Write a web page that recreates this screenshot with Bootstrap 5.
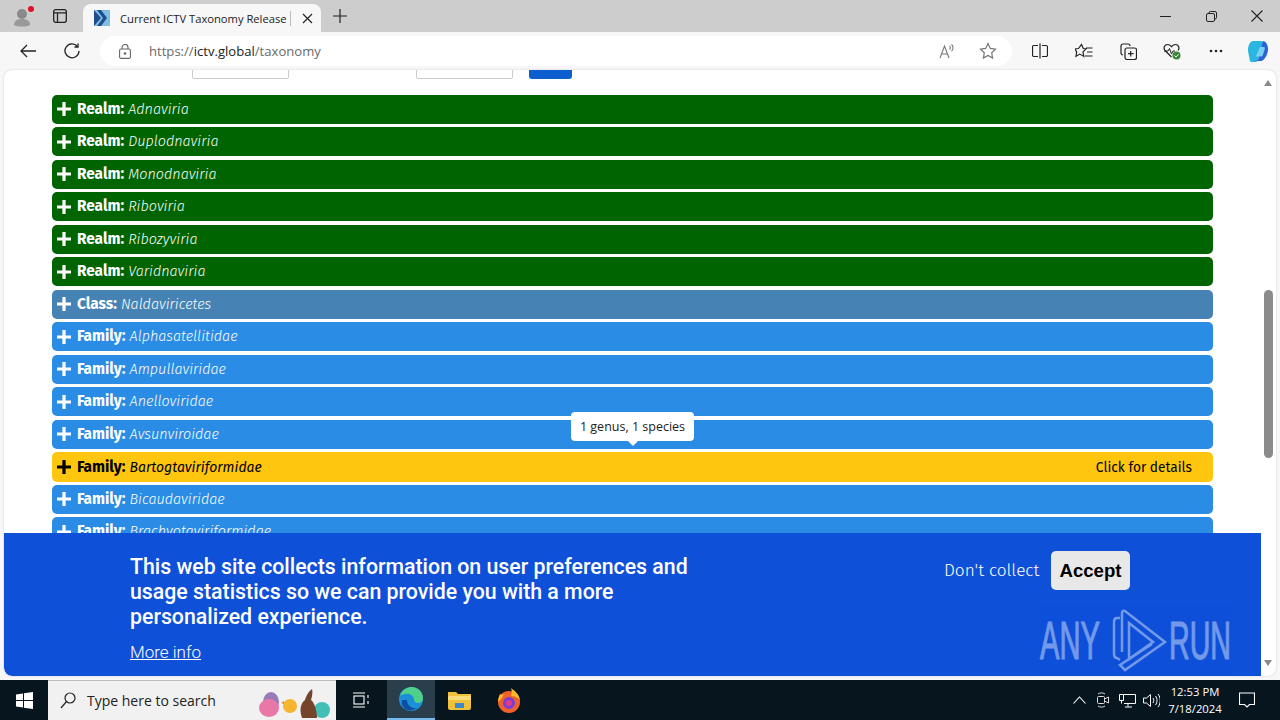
<!DOCTYPE html>
<html>
<head>
    <title>Current ICTV Taxonomy Release</title>
    <link href="https://cdn.jsdelivr.net/npm/bootstrap@5.3.5/dist/css/bootstrap.min.css" rel="stylesheet">
    <style>
        html, body { height: 720px; overflow: hidden; }
        body { width: 1280px; background: #f7f7f7; font-family: "Open Sans", sans-serif; }
        svg { display: block; flex: none; }

        .tabstrip { height: 32px; background: #cdcdcd; }
        .profile-slot { width: 44px; }
        .tabs-slot { width: 32px; margin-right: 7px; }
        .browser-tab { width: 238px; height: 28px; margin-top: 4px; background: #f7f7f7; border-radius: 8px 8px 0 0; padding: 0 8px 0 11px; font: 11.2px "Open Sans", sans-serif; color: #222; }
        .tab-title { width: 171px; margin-left: 10px; overflow: hidden; white-space: nowrap; border-right: 1px solid #bbb; }
        .new-tab { width: 38px; }
        .win-btn { width: 46px; }

        .toolbar { height: 38px; padding-top: 4px; }
        .tool-btn { width: 44px; height: 30px; }
        .tool-back { margin-left: 6px; }
        .tool-copilot { margin-left: -2px; }
        .address-pill { width: 912px; height: 30px; margin-left: 6px; margin-right: 6px; background: #fff; border-radius: 15px; padding: 0 15px 0 19px; font: 13.1px "Open Sans", sans-serif; color: #6a6a6a; }
        .address-pill b { font-weight: 400; color: #222; }
        .url-text { margin-left: 18px; }

        .viewport { height: 606px; margin: 0 4px; background: #fff; border-radius: 8px; overflow: hidden; box-shadow: 0 0 2px rgba(0,0,0,.2); }
        .page-col { width: 1257px; padding: 0 48px; }
        .form-strip { height: 9px; margin-bottom: 15.9px; }
        .form-box { width: 97px; height: 20px; border: 1px solid #ccc; border-radius: 0 0 2px 2px; background: #fff; }
        .form-go { width: 43px; height: 20px; background: #0d5fd0; border-radius: 0 0 3px 3px; }
        .spacer-a { width: 140px; }
        .spacer-b { width: 127px; }
        .spacer-c { width: 16px; }

        .tax-row { height: 29px; margin-bottom: 3.5px; padding: 0 21px 0 5px; border-radius: 5px; color: #fff; font: 14px/29px "Fira Sans", "Open Sans", sans-serif; white-space: nowrap; }
        .tax-row b { font-weight: 700; margin: 0 4px 0 6px; font-size: 15.4px; }
        .tax-row i { font-weight: 300; font-size: 14.4px; }
        .tax-row svg { fill: currentColor; }
        .row-realm { background: #006400; }
        .row-class { background: #4682b4; }
        .row-family { background: #2a8ce4; }
        .row-hover { background: #ffc60f; color: #000; height: 30px; margin-bottom: 2.5px; }
        .row-hover i { font-weight: 400; font-size: 14px; }
        .hover-note { font-size: 13.7px; }

        .tax-tooltip { --bs-tooltip-bg: #fff; --bs-tooltip-color: #222; --bs-tooltip-opacity: 1; --bs-tooltip-border-radius: 4px; --bs-tooltip-max-width: 140px; --bs-tooltip-padding-x: 0; --bs-tooltip-padding-y: 5px; --bs-tooltip-font-size: 12.5px; --bs-tooltip-arrow-height: 6px; position: absolute; left: 561px; top: 336px; width: 123px; font-family: "Open Sans", sans-serif; white-space: nowrap; }
        .tax-tooltip .tooltip-arrow { position: absolute; left: 62px; }
        .tax-tooltip .tooltip-inner { width: 123px; height: 29px; line-height: 19px; }

        .side-scroll { width: 14px; }
        .scroll-thumb { width: 9px; height: 168px; margin: 0 auto; background: #8b8b8b; border-radius: 5px; }
        .scroll-up { width: 0; height: 0; border: 4px solid transparent; border-top: 0; border-bottom: 6px solid #8a8a8a; margin: 10px auto 0; }
        .scroll-down { width: 0; height: 0; border: 4px solid transparent; border-bottom: 0; border-top: 6px solid #8a8a8a; margin: 0 auto; }
        .scroll-track { height: 574px; padding-top: 204px; }

        .cookie-bar { position: absolute; left: 0; top: 463px; width: 1257px; height: 143px; background: #0f50d9; border-radius: 0 0 0 8px; color: #fff; padding: 21px 0 0 126px; }
        .cookie-text { width: 590px; }
        .cookie-title { font: 500 21.3px/25px Roboto, sans-serif; margin-bottom: 11px; }
        .cookie-more { font: 300 17px/22px Roboto, sans-serif; color: #fff; }
        .cookie-actions { margin-left: 224px; margin-top: -3px; height: 39px; }
        .cookie-deny { width: 96px; font: 300 17.2px "Fira Sans", "Open Sans", sans-serif; margin-right: 11px; white-space: nowrap; }
        .cookie-accept { width: 79px; height: 39px; padding: 0; background: #e9e8e8; border: 0; border-radius: 5px; font: 700 18.6px "Liberation Sans", sans-serif; color: #000; }
        .anyrun-mark { position: absolute; left: 1036px; top: 75px; color: #fff; opacity: .42; font: 400 53px/66px "Liberation Sans", sans-serif; -webkit-text-stroke: 1px #fff; }
        .anyrun-mark span { display: block; transform-origin: left; }
        .anyrun-any { width: 70px; transform: scaleX(.55); }
        .anyrun-run { margin-left: -1px; width: 62px; transform: scaleX(.54); }

        .taskbar { height: 40px; background: #07151f; color: #fff; }
        .start-btn { width: 48px; }
        .search-box { width: 288px; background: #f1f1f1; border-top: 1px solid #bbb; padding-left: 12px; color: #222; font: 14px "Open Sans", sans-serif; }
        .search-label { margin-left: 11px; }
        .search-art { margin-left: auto; margin-right: 6px; }
        .task-view { width: 51px; }
        .task-edge { width: 48px; background: #2b3e4b; border-bottom: 2px solid #76b9ed; }
        .task-app { width: 49px; }
        .tray-icon { width: 24px; }
        .clock { width: 58px; margin-left: 3px; padding-top: 3px; text-align: center; font: 11.3px/17px "Open Sans", sans-serif; }
        .notify-btn { width: 46px; margin-right: 10px; }
    </style>
</head>
<body class="d-flex flex-column">

<div class="tabstrip d-flex">
    <div class="profile-slot d-flex align-items-center justify-content-center">
        <svg width="24" height="24" viewBox="-2 0 24 24"><circle cx="10" cy="10" r="5" fill="#8a8a8a"/><path d="M2 21c0-5 4-6 8-6s8 1 8 6c-3 2-13 2-16 0z" fill="#9a9a9a"/><circle cx="19" cy="5" r="3" fill="#e0102a"/></svg>
    </div>
    <div class="tabs-slot d-flex align-items-center justify-content-center">
        <svg width="14" height="14" viewBox="0 0 14 14" fill="none" stroke="#222" stroke-width="1.3"><rect x=".7" y=".7" width="12.6" height="12.6" rx="2"/><path d="M.7 3.8h12.6M4.5 3.8v9.5" /></svg>
    </div>
    <div class="browser-tab d-flex align-items-center">
        <svg width="16" height="16" viewBox="0 0 16 16"><rect width="16" height="16" fill="#7fbde6"/><path d="M0 0l7 8-7 8z" fill="#1d4e89"/><path d="M3 0h4l6 8-6 8H3l6-8z" fill="#1d4e89"/></svg>
        <div class="tab-title">Current ICTV Taxonomy Release</div>
        <div class="flex-grow-1 d-flex justify-content-end">
            <svg width="11" height="11" viewBox="0 0 11 11" stroke="#222" stroke-width="1.2"><path d="M1 1l9 9M10 1l-9 9"/></svg>
        </div>
    </div>
    <div class="new-tab d-flex align-items-center justify-content-center">
        <svg width="14" height="14" viewBox="0 0 14 14" stroke="#222" stroke-width="1.2"><path d="M7 0v14M0 7h14"/></svg>
    </div>
    <div class="flex-grow-1"></div>
    <div class="win-btn d-flex align-items-center justify-content-center"><svg width="11" height="11" viewBox="0 0 11 11" stroke="#222"><path d="M0 5.500h11"/></svg></div>
    <div class="win-btn d-flex align-items-center justify-content-center"><svg width="11" height="11" viewBox="0 0 11 11" fill="none" stroke="#222"><rect x=".5" y="2.500" width="8" height="8" rx="1.500"/><path d="M3 2.500V2a1.500 1.500 0 0 1 1.500-1.500h4.500a1.500 1.500 0 0 1 1.500 1.500v4.500a1.500 1.500 0 0 1-1.500 1.500"/></svg></div>
    <div class="win-btn d-flex align-items-center justify-content-center"><svg width="12" height="12" viewBox="0 0 12 12" stroke="#222" stroke-width="1.100"><path d="M.5.5l11 11M11.500.5l-11 11"/></svg></div>
</div>

<div class="toolbar d-flex">
    <div class="tool-btn tool-back d-flex align-items-center justify-content-center">
        <svg width="16" height="14" viewBox="0 0 16 14" fill="none" stroke="#222" stroke-width="1.300"><path d="M16 7H1M7 1L1 7l6 6"/></svg>
    </div>
    <div class="tool-btn d-flex align-items-center justify-content-center">
        <svg width="16" height="16" viewBox="0 0 16 16" fill="none" stroke="#222" stroke-width="1.300"><path d="M13.500 3.500A7 7 0 1 0 15 8"/><path d="M14 .5v3.500h-3.500"/></svg>
    </div>
    <div class="address-pill d-flex align-items-center">
        <svg width="12" height="15" viewBox="0 0 12 15" fill="none" stroke="#666" stroke-width="1.100"><rect x=".6" y="5" width="10.800" height="9.400" rx="1.500"/><path d="M3 5V3.500a3 3 0 0 1 6 0V5"/><circle cx="6" cy="9.500" r=".8" fill="#666"/></svg>
        <span class="url-text">https://<b>ictv.global</b>/taxonomy</span>
        <div class="flex-grow-1"></div>
        <svg class="me-4" width="16" height="16" viewBox="0 0 16 16" fill="none" stroke="#777" stroke-width="1.100"><path d="M1 15L5.500 3 10 15M2.600 11h5.800M10.500 3c1.200.8 1.200 2.500 0 3.500M12.500 1.500c2 1.500 2 5 0 6.500"/></svg>
        <svg width="18" height="18" viewBox="0 0 18 18" fill="none" stroke="#777" stroke-width="1.200"><path d="M9 1.500l2.300 4.900 5.200.7-3.800 3.700.9 5.300L9 13.500l-4.600 2.600.9-5.300L1.500 7.100l5.200-.7z"/></svg>
    </div>
    <div class="tool-btn d-flex align-items-center justify-content-center">
        <svg width="16" height="16" viewBox="0 0 16 16" fill="none" stroke="#222" stroke-width="1.200"><path d="M6 2.500H2a1.500 1.500 0 0 0-1.500 1.500v8A1.500 1.500 0 0 0 2 13.500h4M10 2.500h4A1.500 1.500 0 0 1 15.500 4v8a1.500 1.500 0 0 1-1.500 1.500h-4M8 .5v15"/></svg>
    </div>
    <div class="tool-btn d-flex align-items-center justify-content-center">
        <svg width="18" height="17" viewBox="0 0 18 17" fill="none" stroke="#222" stroke-width="1.200"><path d="M6.500 1.500l1.800 4 2.700.4-3 3 .8 4.500-4-2.300-3.800 2.300.7-4.500-2-3 3.800-.4zM11 5h6.500M12 9h5.500M10 13h7.500"/></svg>
    </div>
    <div class="tool-btn d-flex align-items-center justify-content-center">
        <svg width="17" height="17" viewBox="0 0 17 17" fill="none" stroke="#222" stroke-width="1.200"><rect x="5" y="5" width="11.500" height="11.500" rx="2"/><path d="M10.700 8v5.500M8 10.700h5.500M3 12a2 2 0 0 1-2-2V3a2 2 0 0 1 2-2h5a2 2 0 0 1 2 2"/></svg>
    </div>
    <div class="tool-btn d-flex align-items-center justify-content-center">
        <svg width="18" height="17" viewBox="0 0 18 17"><path d="M8.500 14L2 7.500C0 5 1.500 1.500 4.500 1.500c2 0 3 1 4 2.200 1-1.200 2-2.200 4-2.200 3 0 4.500 3.500 2.500 6" fill="none" stroke="#222" stroke-width="1.200"/><path d="M1 8h4l1.500-2.500L8.500 11l1.500-3h2" fill="none" stroke="#222"/><circle cx="13.500" cy="12.500" r="4" fill="#3a8a3a"/><path d="M11.500 12.500l1.500 1.500 2.500-2.500" fill="none" stroke="#fff"/></svg>
    </div>
    <div class="tool-btn d-flex align-items-center justify-content-center">
        <svg width="14" height="4" viewBox="0 0 14 4" fill="#222"><circle cx="2" cy="2" r="1.300"/><circle cx="7" cy="2" r="1.300"/><circle cx="12" cy="2" r="1.300"/></svg>
    </div>
    <div class="tool-btn tool-copilot d-flex align-items-center justify-content-center">
        <svg width="24" height="24" viewBox="0 0 24 24"><path d="M7 2h8c2 0 2.500 1 2 3l-5 16c-.5 1.500-1.500 2-3 2H6c-2 0-2.500-1-2.300-2.500L2 12C1.500 8 4 2 7 2z" fill="#2bb6e0"/><path d="M17 2c3 0 5.500 5 5 9-.5 5-4 11-7 11H9c2 0 3-1 3.500-2.500z" fill="#2a62d8"/><path d="M14 8h4c1 0 1 1 .8 2l-2 6c-.3 1-1 1.500-2 1.500h-5z" fill="#7bd0f2"/></svg>
    </div>
</div>

<div class="viewport position-relative d-flex">
    <div class="page-col">
        <div class="form-strip d-flex align-items-end">
            <div class="spacer-a"></div>
            <div class="form-box"></div>
            <div class="spacer-b"></div>
            <div class="form-box"></div>
            <div class="spacer-c"></div>
            <div class="form-go"></div>
        </div>

        <div id="taxa"></div>
    </div>
    <div class="side-scroll">
        <div class="scroll-up"></div>
        <div class="scroll-track"><div class="scroll-thumb"></div></div>
        <div class="scroll-down"></div>
    </div>

    <div class="tooltip bs-tooltip-top show tax-tooltip" role="tooltip">
        <div class="tooltip-arrow"></div>
        <div class="tooltip-inner">1 genus, 1 species</div>
    </div>

    <div class="cookie-bar d-flex">
        <div class="cookie-text">
            <div class="cookie-title">This web site collects information on user preferences and usage statistics so we can provide you with a more personalized experience.</div>
            <a class="cookie-more" href="#">More info</a>
        </div>
        <div class="cookie-actions d-flex align-items-center">
            <span class="cookie-deny">Don't collect</span>
            <button type="button" class="btn cookie-accept">Accept</button>
        </div>
        <div class="anyrun-mark d-flex align-items-center">
            <span class="anyrun-any">ANY</span>
            <svg width="60" height="66" viewBox="0 0 60 66" fill="none" stroke="#fff" stroke-width="2.500"><path d="M10 10H7Q4 10 4 14V46Q4 50 7 50L10 52"/><path d="M12 44V5Q12 2 15 3L55 34 15 62 10 57 42 36"/><path d="M19 15L43 34 19 51z"/></svg>
            <span class="anyrun-run">RUN</span>
        </div>
    </div>
</div>

<div class="taskbar d-flex mt-auto">
    <div class="start-btn d-flex align-items-center justify-content-center">
        <svg width="17" height="17" viewBox="0 0 17 17" fill="#fff"><path d="M0 2.500l7-1v6.500H0zM8 1.300L17 0v8H8zM0 9h7v6.500l-7-1zM8 9h9v8l-9-1.300z"/></svg>
    </div>
    <div class="search-box d-flex align-items-center">
        <svg width="16" height="17" viewBox="0 0 16 17" fill="none" stroke="#222" stroke-width="1.200"><circle cx="10" cy="6" r="5"/><path d="M6.500 9.500L1 16"/></svg>
        <span class="search-label">Type here to search</span>
        <svg class="search-art" width="72" height="38" viewBox="0 0 72 38"><ellipse cx="13" cy="20" rx="8" ry="10" fill="#9a7ab8"/><ellipse cx="11" cy="26" rx="10" ry="9" fill="#e878a8"/><circle cx="32" cy="24" r="7" fill="#f5b52f"/><path d="M26 19l-3 2 3 1z" fill="#e88a20"/><ellipse cx="64" cy="28" rx="8" ry="8" fill="#42c0b8"/><path d="M44 36c-3-9-1-15 3-18 1-4 4-9 7-11 1 3 0 8-1 11 3 2 6 10 6 18z" fill="#74452a"/></svg>
    </div>
    <div class="task-view d-flex align-items-center justify-content-center">
        <svg width="17" height="16" viewBox="0 0 17 16" fill="none" stroke="#fff" stroke-width="1.100"><rect x="1" y="4" width="10" height="8"/><path d="M0 1h12M0 15h12M15 3v3M15 9v3" /></svg>
    </div>
    <div class="task-edge d-flex align-items-center justify-content-center">
        <svg width="26" height="26" viewBox="0 0 26 26"><circle cx="13" cy="13" r="12" fill="#1c8fd8"/><path d="M2 10C4 3 10 1 14 1c6 0 11 5 11 11 0 3-2 5-5 5-2 0-4-1-4-3 0-5-5-7-9-6-2 .5-4 1-5 2z" fill="#4fd08a"/><path d="M9 14c0 5 4 9 10 8-3 2-7 3-10 2-4-2-6-6-5-10z" fill="#0d4ea0"/></svg>
    </div>
    <div class="task-app d-flex align-items-center justify-content-center">
        <svg width="23" height="20" viewBox="0 0 23 20"><path d="M0 2h8l2 2h13v14a2 2 0 0 1-2 2H2a2 2 0 0 1-2-2z" fill="#f0c23c"/><rect y="6" width="23" height="4" fill="#f8dc7a"/><rect x="7" y="13" width="9" height="5" fill="#3c88c8"/></svg>
    </div>
    <div class="task-app d-flex align-items-center justify-content-center">
        <svg width="24" height="25" viewBox="0 0 24 25"><circle cx="12" cy="14" r="11" fill="#f0612c"/><path d="M14 0c4 3 8 6 9 12-3-3-6-4-9-4 1-3 1-5 0-8z" fill="#fbb829"/><path d="M3 6c-1 2-2 5-2 8 3-3 5-5 6-8-1 1-3 1-4 0z" fill="#fbb829"/><circle cx="12" cy="15" r="6" fill="#7a3fd0"/><circle cx="12" cy="15" r="3" fill="#e33b8c"/></svg>
    </div>
    <div class="flex-grow-1"></div>
    <div class="tray-icon d-flex align-items-center justify-content-center">
        <svg width="13" height="8" viewBox="0 0 13 8" fill="none" stroke="#fff" stroke-width="1.100"><path d="M.5 7.500l6-6.500 6 6.500"/></svg>
    </div>
    <div class="tray-icon d-flex align-items-center justify-content-center">
        <svg width="14" height="16" viewBox="0 0 14 16" fill="none" stroke="#ddd"><rect x="1.500" y="4.500" width="7" height="7" rx="1"/><path d="M8.500 7l4-2v6l-4-2M2 2c2-1.500 5-1.500 7 0M2 14c2 1.500 5 1.500 7 0"/></svg>
    </div>
    <div class="tray-icon d-flex align-items-center justify-content-center">
        <svg width="17" height="15" viewBox="0 0 17 15" fill="none" stroke="#fff"><path d="M5 1.500h11.500v9H5M.5 1.500h4v6h-4zM2.500 7.500v3M9 10.500v3M6 14h7"/></svg>
    </div>
    <div class="tray-icon d-flex align-items-center justify-content-center">
        <svg width="17" height="15" viewBox="0 0 17 15" fill="none" stroke="#fff"><path d="M.5 5v5h3L7.500 13.500v-12L3.500 5zM10 5c1 1.500 1 3.500 0 5M12.500 3c2 2.500 2 6.500 0 9M15 1c3 3.500 3 9.500 0 13"/></svg>
    </div>
    <div class="clock">12:53 PM<br>7/18/2024</div>
    <div class="notify-btn d-flex align-items-center justify-content-center">
        <svg width="16" height="16" viewBox="0 0 16 16" fill="none" stroke="#fff" stroke-width="1.100"><path d="M.5 1h15v11.500h-5L8 15l-2.500-2.500h-5z"/></svg>
    </div>
</div>

<script src="https://cdn.jsdelivr.net/npm/bootstrap@5.3.5/dist/js/bootstrap.bundle.min.js"></script>
<script>
    const taxa = [
        ['Realm', 'Adnaviria', 'row-realm'],
        ['Realm', 'Duplodnaviria', 'row-realm'],
        ['Realm', 'Monodnaviria', 'row-realm'],
        ['Realm', 'Riboviria', 'row-realm'],
        ['Realm', 'Ribozyviria', 'row-realm'],
        ['Realm', 'Varidnaviria', 'row-realm'],
        ['Class', 'Naldaviricetes', 'row-class'],
        ['Family', 'Alphasatellitidae', 'row-family'],
        ['Family', 'Ampullaviridae', 'row-family'],
        ['Family', 'Anelloviridae', 'row-family'],
        ['Family', 'Avsunviroidae', 'row-family'],
        ['Family', 'Bartogtaviriformidae', 'row-hover'],
        ['Family', 'Bicaudaviridae', 'row-family'],
        ['Family', 'Brachyotaviriformidae', 'row-family']
    ];

    const plus = '<svg width="14" height="14" viewBox="0 0 13 13"><path d="M5 0h3v5h5v3H8v5H5V8H0V5h5z"/></svg>';

    document.getElementById('taxa').innerHTML = taxa.map(t => {
        const note = t[2] === 'row-hover' ? '<span class="ms-auto hover-note">Click for details</span>' : '';
        return `<div class="tax-row ${t[2]} d-flex align-items-center">${plus}<b>${t[0]}:</b><i>${t[1]}</i>${note}</div>`;
    }).join('');
</script>
</body>
</html>
